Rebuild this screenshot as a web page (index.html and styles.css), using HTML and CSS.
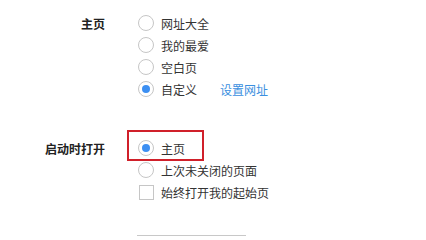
FILE: index.html
```html
<!DOCTYPE html>
<html>
<head>
<meta charset="utf-8">
<link rel="stylesheet" href="styles.css">
</head>
<body>
<div class="page">
  <div class="section first">
    <div class="label">主页</div>
    <div class="options">
      <div class="opt"><span class="radio"></span><span class="txt">网址大全</span></div>
      <div class="opt"><span class="radio"></span><span class="txt">我的最爱</span></div>
      <div class="opt"><span class="radio"></span><span class="txt">空白页</span></div>
      <div class="opt"><span class="radio on"></span><span class="txt">自定义</span><a class="link">设置网址</a></div>
    </div>
  </div>
  <div class="section second">
    <div class="label">启动时打开</div>
    <div class="options">
      <div class="opt marked"><span class="radio on"></span><span class="txt">主页</span><span class="highlight"></span></div>
      <div class="opt"><span class="radio"></span><span class="txt">上次未关闭的页面</span></div>
      <div class="opt"><span class="check"></span><span class="txt">始终打开我的起始页</span></div>
    </div>
  </div>
  <div class="rule"></div>
</div>
</body>
</html>
```
FILE: styles.css
```css
html, body {
  margin: 0;
  padding: 0;
  background: #fff;
}
body {
  font-family: "Noto Sans CJK SC", "Microsoft YaHei", sans-serif;
  font-size: 12px;
  color: #333;
}
.page {
  width: 426px;
  height: 237px;
  overflow: hidden;
  padding-top: 12px;
  box-sizing: border-box;
}
.section {
  display: flex;
}
.second {
  margin-top: 37px;
}
.label {
  width: 105px;
  text-align: right;
  font-weight: bold;
  color: #222;
  height: 22px;
  line-height: 23px;
}
.options {
  margin-left: 33px;
  display: flex;
  flex-direction: column;
}
.opt {
  position: relative;
  display: flex;
  align-items: center;
  height: 22px;
}
.radio {
  width: 16px;
  height: 16px;
  border: 1px solid #c6c6c6;
  border-radius: 50%;
  box-sizing: border-box;
  display: flex;
  align-items: center;
  justify-content: center;
  background: #fff;
}
.radio.on::after {
  content: "";
  width: 8px;
  height: 8px;
  border-radius: 50%;
  background: #3c8ff2;
}
.check {
  width: 15px;
  height: 15px;
  margin-left: 1px;
  border: 1px solid #c6c6c6;
  box-sizing: border-box;
  background: #fff;
}
.check + .txt {
  margin-left: 7px;
}
.txt {
  margin-left: 7px;
  line-height: 23px;
}
.link {
  margin-left: 23px;
  color: #3a8fe0;
  line-height: 23px;
}
.highlight {
  position: absolute;
  left: -11px;
  top: -7px;
  width: 77px;
  height: 31px;
  border: 2px solid #d0202a;
  box-sizing: border-box;
}
.rule {
  margin-left: 137px;
  margin-top: 32px;
  width: 109px;
  height: 1px;
  background: #c8c8c8;
}
```
